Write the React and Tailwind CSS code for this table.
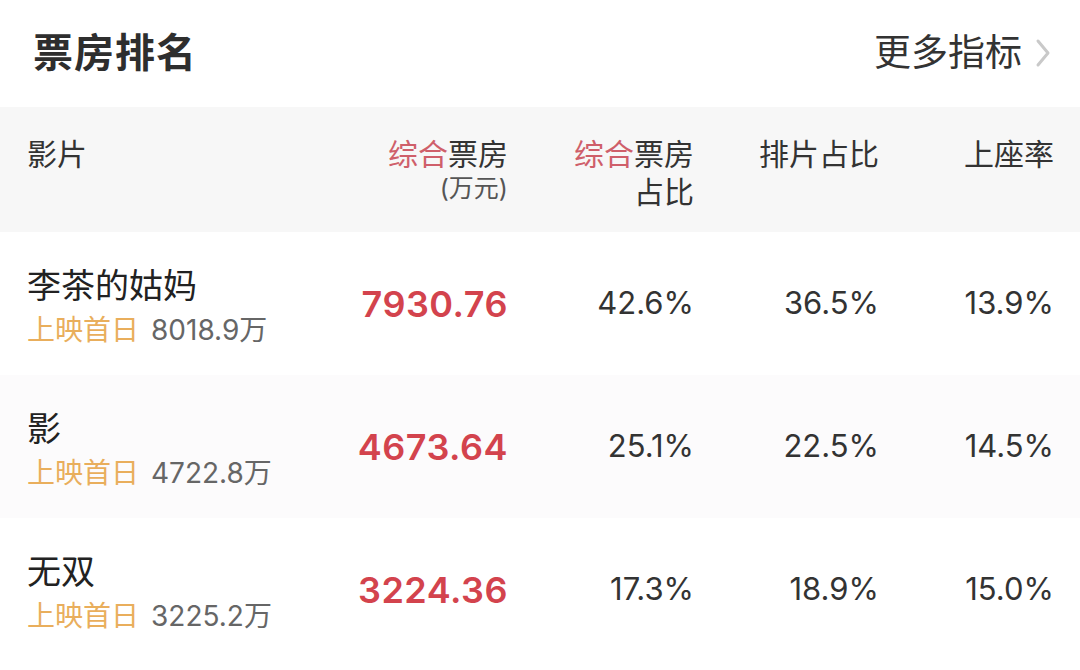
const FONT = { fontFamily: '"Inter", "Noto Sans CJK SC", sans-serif' }

const ROWS = [
  { name: '李茶的姑妈', first: '8018.9万', box: '7930.76', share: '42.6%', sched: '36.5%', seat: '13.9%' },
  { name: '影', first: '4722.8万', box: '4673.64', share: '25.1%', sched: '22.5%', seat: '14.5%', tint: true },
  { name: '无双', first: '3225.2万', box: '3224.36', share: '17.3%', sched: '18.9%', seat: '15.0%' },
]

const COLS = 'grid grid-cols-[300px_181px_186px_185px_175px] pl-[27px] pr-[26px]'

export default function App() {
  return (
    <div className="w-[1080px] h-[670px] bg-white text-[#333] overflow-hidden" style={FONT}>
      {/* title bar */}
      <div className="h-[107px] flex items-center justify-between pl-[33px] pr-[28px] pb-[2px]">
        <h1 className="text-[40px] font-bold leading-none tracking-[1px] text-[#2e2e2e]">票房排名</h1>
        <div className="flex items-center gap-[12px]">
          <span className="text-[37px] leading-none">更多指标</span>
          <svg width="18" height="30" viewBox="0 0 18 30" fill="none">
            <path d="M4 3 L14 15 L4 27" stroke="#c9c9c9" strokeWidth="3" strokeLinecap="round" strokeLinejoin="round" />
          </svg>
        </div>
      </div>

      {/* table header */}
      <div className={`${COLS} h-[125px] bg-[#f7f7f7] pt-[28px] text-[30px] leading-[38px]`}>
        <div>影片</div>
        <div className="text-right">
          <div><span className="text-[#cf5f6a]">综合</span>票房</div>
          <div className="text-[25px] leading-[30px] text-[#555]">(万元)</div>
        </div>
        <div className="text-right">
          <div><span className="text-[#cf5f6a]">综合</span>票房</div>
          <div>占比</div>
        </div>
        <div className="text-right">排片占比</div>
        <div className="text-right">上座率</div>
      </div>

      {/* rows */}
      {ROWS.map(r => (
        <div key={r.name} className={`${COLS} h-[143px] items-center ${r.tint ? 'bg-[#fcfbfc]' : ''}`}>
          <div className="flex flex-col gap-[8px] pt-[6px]">
            <div className="text-[34px] leading-[38px] text-[#222]">{r.name}</div>
            <div className="text-[28px] leading-[34px] flex items-center gap-[12px]">
              <span className="text-[#e9ae5c]">上映首日</span>
              <span className="text-[#666]">{r.first}</span>
            </div>
          </div>
          <div className="text-right text-[36px] font-semibold text-[#d3434d] tracking-[0.5px]">{r.box}</div>
          <div className="text-right text-[31px]">{r.share}</div>
          <div className="text-right text-[31px]">{r.sched}</div>
          <div className="text-right text-[31px]">{r.seat}</div>
        </div>
      ))}
    </div>
  )
}
